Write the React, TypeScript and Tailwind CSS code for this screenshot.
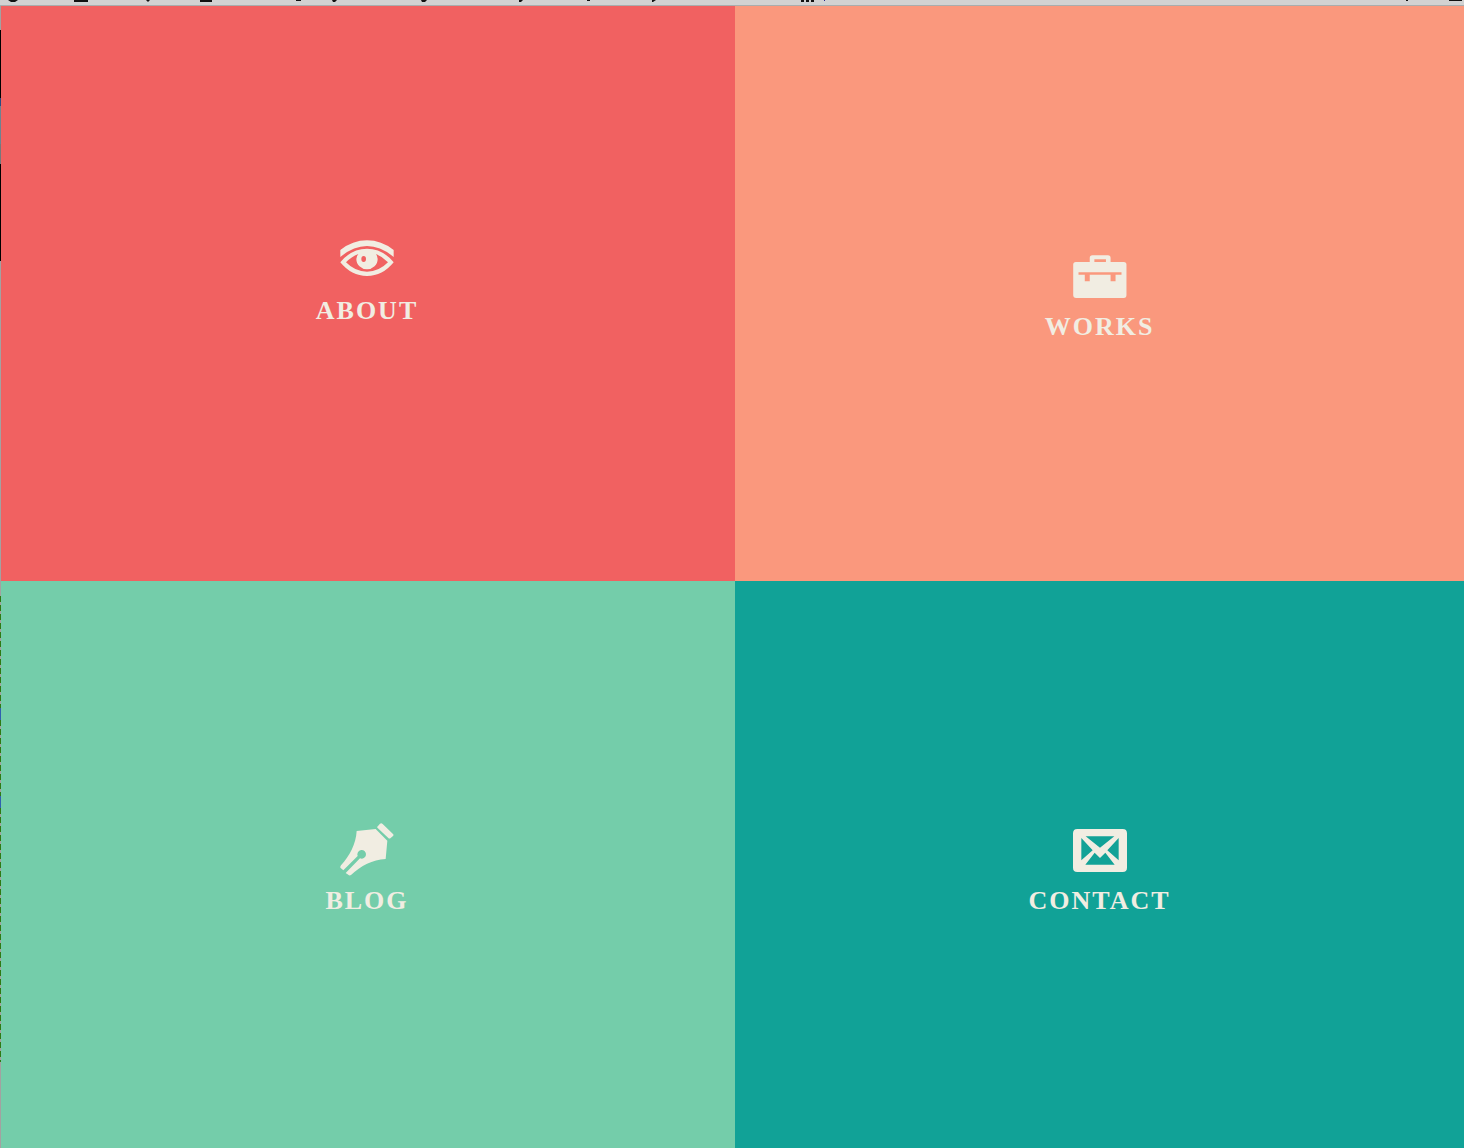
import type { ReactNode } from "react";

function EyeIcon() {
  return (
    <svg viewBox="100 30 162 108" className="h-9 w-[54px]" fill="currentColor" aria-hidden="true">
      <path d="M101 60Q138 31 181 31Q224 31 261 60V81Q222 48 181 48Q140 48 101 81Z" />
      <path
        fillRule="evenodd"
        d="M101 97Q134 56 181 56Q228 56 261 97Q228 138 181 138Q134 138 101 97ZM118 97Q145 125 181 125Q217 125 244 97Q228 80 208 72Q213 79 213 87A32 31 0 0 1 149 87Q149 79 155 72Q134 80 118 97ZM171 78A7 9 0 1 0 171 96A7 9 0 1 0 171 78Z"
      />
    </svg>
  );
}

function BriefcaseIcon() {
  return (
    <svg viewBox="97 32 162 130" className="h-[43px] w-[54px]" fill="currentColor" aria-hidden="true">
      <path
        fillRule="evenodd"
        d="M105 53H147V41Q147 33 155 33H202Q210 33 210 41V53H250Q258 53 258 61V153Q258 162 250 162H106Q97 162 97 153V61Q97 53 105 53ZM161 45V53H196V45ZM113 84V92H132V111H147V92H210V111H225V92H243V84Z"
      />
    </svg>
  );
}

function PenIcon() {
  return (
    <svg viewBox="101 26 162 159" className="h-[53px] w-[54px]" fill="currentColor" aria-hidden="true">
      <path d="M221 28Q225 25 229 29L260 59Q263 62 260 65L253 71Q249 74 246 71L214 41Q211 38 215 35Z" />
      <path d="M151 50L208 44L243 79L238 134C198 136 164 154 134 182Q131 184 128 183L118 176L161 132A13 13 0 1 0 154 125L111 168L102 160Q101 157 104 153C130 125 149 88 151 50Z" />
    </svg>
  );
}

function MailIcon() {
  return (
    <svg viewBox="158 27 162 129" className="h-[43px] w-[54px]" fill="currentColor" aria-hidden="true">
      <path
        fillRule="evenodd"
        d="M171 27H307Q320 27 320 40V143Q320 156 307 156H171Q158 156 158 143V40Q158 27 171 27ZM196 49L239 83L282 49ZM183 54V121L217 91ZM295 54L261 91L295 121ZM223 98L195 134H283L255 98L239 114Z"
      />
    </svg>
  );
}

type TileProps = { label: string; href: string; className: string; children: ReactNode };

function Tile({ label, href, className, children }: TileProps) {
  return (
    <a href={href} className={`flex flex-col items-center justify-center text-[#f1ede2] ${className}`}>
      {children}
      <span className="text-[26px] leading-8 font-bold tracking-[2px]">{label}</span>
    </a>
  );
}

function TopBar() {
  return (
    <div className="h-[6px] shrink-0 overflow-hidden border-b border-[#a9adad] bg-[#d2d2d2]" aria-hidden="true">
      <svg className="block h-[5px] w-[1464px] max-w-none" viewBox="0 0 1464 5" fill="#111">
        <path d="M8 0H18L15 2H11ZM74 0H88V2H74ZM146 0H150L148 2ZM200 0H212V2H200ZM296 0H301V1H296ZM332 0H337L335 2H333ZM421 0H427L425 2H422ZM519 0H523L521 2H519ZM587 0H590V1H587ZM652 0H656L653 2H652ZM801 0H804V2H801ZM806 0H809V2H806ZM811 0H814V2H811ZM1406 0H1408V1H1406ZM1449 0H1462V1H1449Z" />
        <path fill="#22228a" d="M824 0H825V1H824Z" />
      </svg>
    </div>
  );
}

function WindowEdge() {
  return (
    <div className="flex w-px shrink-0 flex-col bg-[#a3a1a1]" aria-hidden="true">
      <div className="h-6" />
      <div className="h-[68px] bg-black" />
      <div className="h-2 bg-[#2a4a80]" />
      <div className="h-[38px] bg-[#6d8290]" />
      <div className="h-5 bg-[#77777a]" />
      <div className="h-[97px] bg-black" />
      <div className="h-[335px]" />
      <div className="h-[112px] bg-[repeating-linear-gradient(#2f7a14_0_6px,#a3a1a1_6px_9px)]" />
      <div className="h-3 bg-[#3060b0]" />
      <div className="h-[76px] bg-[repeating-linear-gradient(#2f7a14_0_6px,#a3a1a1_6px_9px)]" />
      <div className="h-3 bg-[#3060b0]" />
      <div className="h-[254px] bg-[repeating-linear-gradient(#2f7a14_0_6px,#a3a1a1_6px_9px)]" />
    </div>
  );
}

export default function App() {
  return (
    <div className="flex min-h-screen flex-col font-['Liberation_Serif',serif]">
      <TopBar />
      <div className="flex flex-1">
        <WindowEdge />
        <nav className="grid flex-1 grid-cols-[734fr_729fr] grid-rows-[575fr_567fr]" aria-label="Main">
          <Tile label="ABOUT" href="#about" className="gap-[19px] bg-[#f16161] pr-[2px] pb-5">
            <EyeIcon />
          </Tile>
          <Tile label="WORKS" href="#works" className="gap-[13px] bg-[#fa987d] pt-[10px]">
            <BriefcaseIcon />
          </Tile>
          <Tile label="BLOG" href="#blog" className="gap-[9px] bg-[#74cdaa] pt-[10px] pr-[2px]">
            <PenIcon />
          </Tile>
          <Tile label="CONTACT" href="#contact" className="gap-[13px] bg-[#11a297] pt-4">
            <MailIcon />
          </Tile>
        </nav>
      </div>
    </div>
  );
}
